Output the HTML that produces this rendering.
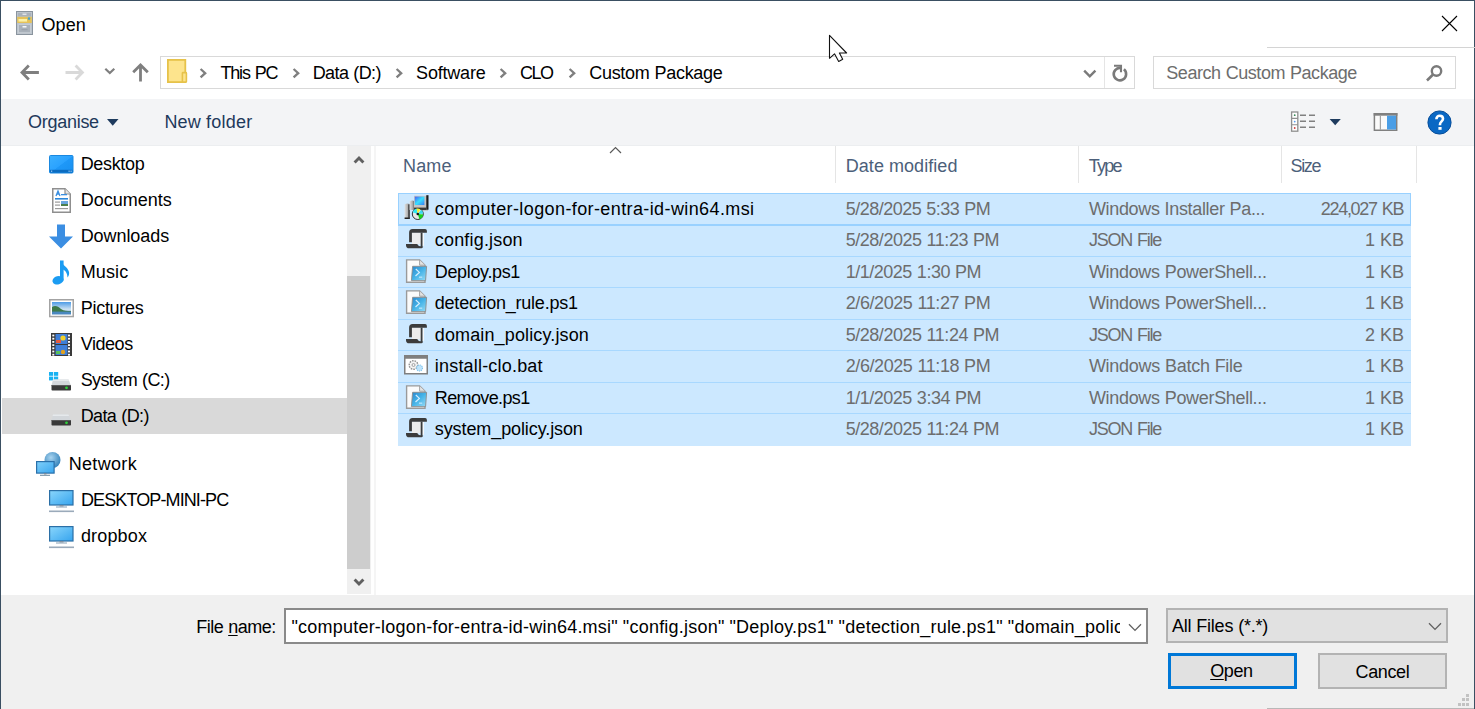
<!DOCTYPE html><html><head><meta charset="utf-8"><style>
html,body{margin:0;padding:0;}
body{width:1475px;height:709px;overflow:hidden;position:relative;background:#fff;font-family:"Liberation Sans",sans-serif;}
.t{position:absolute;white-space:nowrap;line-height:normal;}
</style></head><body>
<div style="position:absolute;left:0px;top:0px;width:1475px;height:1px;background:#3a4f62"></div>
<div style="position:absolute;left:0px;top:0px;width:1px;height:709px;background:#3a4f62"></div>
<div style="position:absolute;left:1474px;top:0px;width:1px;height:709px;background:#3a4f62"></div>
<div class="t" style="left:41.50px;top:15px;font-size:18px;color:#000;letter-spacing:0.100px;word-spacing:-0.100px;">Open</div>
<svg style="position:absolute;left:1441px;top:15px;" width="17" height="17" viewBox="0 0 17 17"><path d="M1 1L16 16M16 1L1 16" stroke="#000" stroke-width="1.1"/></svg>
<div style="position:absolute;left:1267px;top:47px;width:208px;height:1px;background:#d4d4d4"></div>
<div style="position:absolute;left:160px;top:56px;width:975px;height:33px;border:1px solid #d9d9d9;box-sizing:border-box;background:#fff"></div>
<div style="position:absolute;left:1104px;top:57px;width:1px;height:31px;background:#e5e5e5"></div>
<div style="position:absolute;left:1153px;top:56px;width:303px;height:33px;border:1px solid #d9d9d9;box-sizing:border-box;background:#fff"></div>
<div class="t" style="left:220.50px;top:63px;font-size:18px;color:#000;letter-spacing:-1.200px;word-spacing:1.200px;">This PC</div>
<div class="t" style="left:312.70px;top:63px;font-size:18px;color:#000;letter-spacing:-0.600px;word-spacing:0.600px;">Data (D:)</div>
<div class="t" style="left:416.10px;top:63px;font-size:18px;color:#000;letter-spacing:-0.200px;word-spacing:0.200px;">Software</div>
<div class="t" style="left:520.00px;top:63px;font-size:18px;color:#000;letter-spacing:-1.450px;word-spacing:1.450px;">CLO</div>
<div class="t" style="left:589.20px;top:63px;font-size:18px;color:#000;letter-spacing:-0.285px;word-spacing:0.285px;">Custom Package</div>
<svg style="position:absolute;left:199px;top:67px;" width="9" height="12" viewBox="0 0 9 12"><path d="M1.6 2L6.2 6.2L1.6 10.4" fill="none" stroke="#7f7f7f" stroke-width="2.3"/></svg>
<svg style="position:absolute;left:292px;top:67px;" width="9" height="12" viewBox="0 0 9 12"><path d="M1.6 2L6.2 6.2L1.6 10.4" fill="none" stroke="#7f7f7f" stroke-width="2.3"/></svg>
<svg style="position:absolute;left:395px;top:67px;" width="9" height="12" viewBox="0 0 9 12"><path d="M1.6 2L6.2 6.2L1.6 10.4" fill="none" stroke="#7f7f7f" stroke-width="2.3"/></svg>
<svg style="position:absolute;left:499px;top:67px;" width="9" height="12" viewBox="0 0 9 12"><path d="M1.6 2L6.2 6.2L1.6 10.4" fill="none" stroke="#7f7f7f" stroke-width="2.3"/></svg>
<svg style="position:absolute;left:568px;top:67px;" width="9" height="12" viewBox="0 0 9 12"><path d="M1.6 2L6.2 6.2L1.6 10.4" fill="none" stroke="#7f7f7f" stroke-width="2.3"/></svg>
<div class="t" style="left:1166.30px;top:63px;font-size:18px;color:#6d6d6d;letter-spacing:-0.446px;word-spacing:0.446px;">Search Custom Package</div>
<div style="position:absolute;left:1px;top:99px;width:1473px;height:46px;background:#f3f4f6"></div>
<div style="position:absolute;left:1px;top:145px;width:1473px;height:1px;background:#eceef0"></div>
<div class="t" style="left:28.10px;top:112px;font-size:18px;color:#1e395b;letter-spacing:-0.286px;word-spacing:0.286px;">Organise</div>
<div class="t" style="left:164.40px;top:112px;font-size:18px;color:#1e395b;letter-spacing:0.225px;word-spacing:-0.225px;">New folder</div>
<svg style="position:absolute;left:107px;top:119px;" width="12" height="7" viewBox="0 0 12 7"><path d="M0 0H11.5L5.75 6.8Z" fill="#1e3b5e"/></svg>
<svg style="position:absolute;left:1329px;top:118px;" width="13" height="8" viewBox="0 0 13 8"><path d="M0.6 1H11.8L6.2 7.3Z" fill="#1e3b5e"/></svg>
<div style="position:absolute;left:2px;top:398px;width:345px;height:36px;background:#d9d9d9"></div>
<div class="t" style="left:80.70px;top:154px;font-size:18px;color:#000;letter-spacing:-0.333px;word-spacing:0.333px;">Desktop</div>
<div class="t" style="left:80.70px;top:190px;font-size:18px;color:#000;letter-spacing:0.013px;word-spacing:-0.013px;">Documents</div>
<div class="t" style="left:80.70px;top:226px;font-size:18px;color:#000;letter-spacing:-0.075px;word-spacing:0.075px;">Downloads</div>
<div class="t" style="left:80.70px;top:262px;font-size:18px;color:#000;letter-spacing:0.125px;word-spacing:-0.125px;">Music</div>
<div class="t" style="left:80.70px;top:298px;font-size:18px;color:#000;letter-spacing:-0.271px;word-spacing:0.271px;">Pictures</div>
<div class="t" style="left:80.70px;top:334px;font-size:18px;color:#000;letter-spacing:-0.450px;word-spacing:0.450px;">Videos</div>
<div class="t" style="left:80.70px;top:370px;font-size:18px;color:#000;letter-spacing:-0.611px;word-spacing:0.611px;">System (C:)</div>
<div class="t" style="left:80.70px;top:406px;font-size:18px;color:#000;letter-spacing:-0.614px;word-spacing:0.614px;">Data (D:)</div>
<div class="t" style="left:68.70px;top:454px;font-size:18px;color:#000;letter-spacing:0.329px;word-spacing:-0.329px;">Network</div>
<div class="t" style="left:80.90px;top:490px;font-size:18px;color:#000;letter-spacing:-0.882px;word-spacing:0.882px;">DESKTOP-MINI-PC</div>
<div class="t" style="left:80.90px;top:526px;font-size:18px;color:#000;letter-spacing:0.167px;word-spacing:-0.167px;">dropbox</div>
<div style="position:absolute;left:347px;top:146px;width:24px;height:448px;background:#f0f0f0"></div>
<div style="position:absolute;left:347px;top:276px;width:23px;height:293px;background:#cdcdcd"></div>
<svg style="position:absolute;left:353px;top:154px;" width="12" height="11" viewBox="0 0 12 11"><path d="M1.6 8.6L6 4L10.4 8.6" fill="none" stroke="#606060" stroke-width="2.9"/></svg>
<svg style="position:absolute;left:353px;top:577px;" width="12" height="11" viewBox="0 0 12 11"><path d="M1.6 2.4L6 7L10.4 2.4" fill="none" stroke="#606060" stroke-width="2.9"/></svg>
<div style="position:absolute;left:374px;top:146px;width:2px;height:449px;background:#f5f5f5"></div>
<div class="t" style="left:403.10px;top:156px;font-size:18px;color:#4c607a;letter-spacing:0.133px;word-spacing:-0.133px;">Name</div>
<div class="t" style="left:845.70px;top:156px;font-size:18px;color:#4c607a;letter-spacing:0.061px;word-spacing:-0.061px;">Date modified</div>
<div class="t" style="left:1088.70px;top:156px;font-size:18px;color:#4c607a;letter-spacing:-1.733px;word-spacing:1.733px;">Type</div>
<div class="t" style="left:1290.50px;top:156px;font-size:18px;color:#4c607a;letter-spacing:-1.333px;word-spacing:1.333px;">Size</div>
<svg style="position:absolute;left:609px;top:146px;" width="13" height="8" viewBox="0 0 13 8"><path d="M1 7L6.5 1.5L12 7" fill="none" stroke="#5a5a5a" stroke-width="1.2"/></svg>
<div style="position:absolute;left:835px;top:146px;width:1px;height:37px;background:#e5e5e5"></div>
<div style="position:absolute;left:1078px;top:146px;width:1px;height:37px;background:#e5e5e5"></div>
<div style="position:absolute;left:1281px;top:146px;width:1px;height:37px;background:#e5e5e5"></div>
<div style="position:absolute;left:1416px;top:146px;width:1px;height:37px;background:#e5e5e5"></div>
<div style="position:absolute;left:398px;top:193px;width:1013px;height:253px;background:#cce8ff"></div>
<div style="position:absolute;left:398px;top:224px;width:1013px;height:1px;background:#a8d8ff"></div>
<div style="position:absolute;left:398px;top:256px;width:1013px;height:1px;background:#a8d8ff"></div>
<div style="position:absolute;left:398px;top:287px;width:1013px;height:1px;background:#a8d8ff"></div>
<div style="position:absolute;left:398px;top:319px;width:1013px;height:1px;background:#a8d8ff"></div>
<div style="position:absolute;left:398px;top:350px;width:1013px;height:1px;background:#a8d8ff"></div>
<div style="position:absolute;left:398px;top:382px;width:1013px;height:1px;background:#a8d8ff"></div>
<div style="position:absolute;left:398px;top:413px;width:1013px;height:1px;background:#a8d8ff"></div>
<div style="position:absolute;left:398px;top:193px;width:1013px;height:33px;border:1px solid #99d1ff;border-bottom-width:2px;box-sizing:border-box"></div>
<div class="t" style="left:434.80px;top:199px;font-size:18px;color:#000;letter-spacing:0.394px;word-spacing:-0.394px;">computer-logon-for-entra-id-win64.msi</div>
<div class="t" style="left:845.70px;top:199px;font-size:18px;color:#6d6d6d;letter-spacing:-0.509px;word-spacing:0.509px;">5/28/2025 5:33 PM</div>
<div class="t" style="left:1088.90px;top:199px;font-size:18px;color:#6d6d6d;letter-spacing:-0.336px;word-spacing:0.336px;">Windows Installer Pa...</div>
<div class="t" style="left:1320.70px;top:199px;font-size:18px;color:#6d6d6d;letter-spacing:-1.278px;word-spacing:1.278px;">224,027 KB</div>
<div class="t" style="left:434.80px;top:230px;font-size:18px;color:#000;letter-spacing:0.178px;word-spacing:-0.178px;">config.json</div>
<div class="t" style="left:845.70px;top:230px;font-size:18px;color:#6d6d6d;letter-spacing:-0.463px;word-spacing:0.463px;">5/28/2025 11:23 PM</div>
<div class="t" style="left:1088.90px;top:230px;font-size:18px;color:#6d6d6d;letter-spacing:-1.243px;word-spacing:1.243px;">JSON File</div>
<div class="t" style="left:1365.10px;top:230px;font-size:18px;color:#6d6d6d;letter-spacing:0.000px;">1 KB</div>
<div class="t" style="left:434.80px;top:262px;font-size:18px;color:#000;letter-spacing:-0.350px;word-spacing:0.350px;">Deploy.ps1</div>
<div class="t" style="left:845.70px;top:262px;font-size:18px;color:#6d6d6d;letter-spacing:-0.487px;word-spacing:0.487px;">1/1/2025 1:30 PM</div>
<div class="t" style="left:1088.90px;top:262px;font-size:18px;color:#6d6d6d;letter-spacing:-0.317px;word-spacing:0.317px;">Windows PowerShell...</div>
<div class="t" style="left:1365.10px;top:262px;font-size:18px;color:#6d6d6d;letter-spacing:0.000px;">1 KB</div>
<div class="t" style="left:434.80px;top:293px;font-size:18px;color:#000;letter-spacing:-0.231px;word-spacing:0.231px;">detection_rule.ps1</div>
<div class="t" style="left:845.70px;top:293px;font-size:18px;color:#6d6d6d;letter-spacing:-0.411px;word-spacing:0.411px;">2/6/2025 11:27 PM</div>
<div class="t" style="left:1088.90px;top:293px;font-size:18px;color:#6d6d6d;letter-spacing:-0.317px;word-spacing:0.317px;">Windows PowerShell...</div>
<div class="t" style="left:1365.10px;top:293px;font-size:18px;color:#6d6d6d;letter-spacing:0.000px;">1 KB</div>
<div class="t" style="left:434.80px;top:325px;font-size:18px;color:#000;letter-spacing:0.132px;word-spacing:-0.132px;">domain_policy.json</div>
<div class="t" style="left:845.70px;top:325px;font-size:18px;color:#6d6d6d;letter-spacing:-0.463px;word-spacing:0.463px;">5/28/2025 11:24 PM</div>
<div class="t" style="left:1088.90px;top:325px;font-size:18px;color:#6d6d6d;letter-spacing:-1.243px;word-spacing:1.243px;">JSON File</div>
<div class="t" style="left:1365.10px;top:325px;font-size:18px;color:#6d6d6d;letter-spacing:0.000px;">2 KB</div>
<div class="t" style="left:434.80px;top:356px;font-size:18px;color:#000;letter-spacing:0.193px;word-spacing:-0.193px;">install-clo.bat</div>
<div class="t" style="left:845.70px;top:356px;font-size:18px;color:#6d6d6d;letter-spacing:-0.411px;word-spacing:0.411px;">2/6/2025 11:18 PM</div>
<div class="t" style="left:1088.90px;top:356px;font-size:18px;color:#6d6d6d;letter-spacing:-0.275px;word-spacing:0.275px;">Windows Batch File</div>
<div class="t" style="left:1365.10px;top:356px;font-size:18px;color:#6d6d6d;letter-spacing:0.000px;">1 KB</div>
<div class="t" style="left:434.80px;top:388px;font-size:18px;color:#000;letter-spacing:-0.622px;word-spacing:0.622px;">Remove.ps1</div>
<div class="t" style="left:845.70px;top:388px;font-size:18px;color:#6d6d6d;letter-spacing:-0.487px;word-spacing:0.487px;">1/1/2025 3:34 PM</div>
<div class="t" style="left:1088.90px;top:388px;font-size:18px;color:#6d6d6d;letter-spacing:-0.317px;word-spacing:0.317px;">Windows PowerShell...</div>
<div class="t" style="left:1365.10px;top:388px;font-size:18px;color:#6d6d6d;letter-spacing:0.000px;">1 KB</div>
<div class="t" style="left:434.80px;top:419px;font-size:18px;color:#000;letter-spacing:-0.097px;word-spacing:0.097px;">system_policy.json</div>
<div class="t" style="left:845.70px;top:419px;font-size:18px;color:#6d6d6d;letter-spacing:-0.463px;word-spacing:0.463px;">5/28/2025 11:24 PM</div>
<div class="t" style="left:1088.90px;top:419px;font-size:18px;color:#6d6d6d;letter-spacing:-1.243px;word-spacing:1.243px;">JSON File</div>
<div class="t" style="left:1365.10px;top:419px;font-size:18px;color:#6d6d6d;letter-spacing:0.000px;">1 KB</div>
<div style="position:absolute;left:1px;top:595px;width:1473px;height:114px;background:#f0f0f0"></div>
<div class="t" style="left:196.20px;top:617px;font-size:18px;color:#000;letter-spacing:-0.512px;word-spacing:0.512px;">File <span style="text-decoration:underline;text-underline-offset:2px">n</span>ame:</div>
<div style="position:absolute;left:284px;top:608px;width:864px;height:36px;background:#fff;border:2px solid #8a8a8a;box-sizing:border-box"></div>
<div style="position:absolute;left:286px;top:610px;width:834px;height:33px;overflow:hidden">
<div class="t" style="left:5.50px;top:7px;font-size:18px;color:#000;letter-spacing:0.217px;word-spacing:-0.217px;">&quot;computer-logon-for-entra-id-win64.msi&quot; &quot;config.json&quot; &quot;Deploy.ps1&quot; &quot;detection_rule.ps1&quot; &quot;domain_policy.json&quot; &quot;install-clo.bat&quot;</div>
</div>
<div style="position:absolute;left:1166px;top:608px;width:282px;height:35px;background:#e1e1e1;border:2px solid #b3b3b3;box-sizing:border-box"></div>
<div class="t" style="left:1171.90px;top:616px;font-size:18px;color:#000;letter-spacing:-0.217px;word-spacing:0.217px;">All Files (*.*)</div>
<div style="position:absolute;left:1168px;top:653px;width:129px;height:36px;background:#e1e1e1;border:3px solid #0078d7;box-sizing:border-box"></div>
<div class="t" style="left:1210.20px;top:661px;font-size:18px;color:#000;letter-spacing:-0.400px;word-spacing:0.400px;"><span style="text-decoration:underline;text-underline-offset:2px">O</span>pen</div>
<div style="position:absolute;left:1318px;top:653px;width:129px;height:36px;background:#e1e1e1;border:2px solid #b3b3b3;box-sizing:border-box"></div>
<div class="t" style="left:1355.60px;top:662px;font-size:18px;color:#000;letter-spacing:-0.380px;word-spacing:0.380px;">Cancel</div>
<svg style="position:absolute;left:1128px;top:623px;" width="14" height="9" viewBox="0 0 14 9"><path d="M1 1.2L7 7.4L13 1.2" fill="none" stroke="#606060" stroke-width="1.3"/></svg>
<svg style="position:absolute;left:1428px;top:622px;" width="14" height="9" viewBox="0 0 14 9"><path d="M1 1.2L7 7.4L13 1.2" fill="none" stroke="#606060" stroke-width="1.3"/></svg>
<div style="position:absolute;left:1267px;top:708px;width:207px;height:1px;background:#b8b8b8"></div>
<svg style="position:absolute;left:16px;top:11px;" width="17" height="24" viewBox="0 0 17 24"><rect x="0.5" y="0.5" width="16" height="23" fill="#bcc4cc" stroke="#8a949e"/>
<rect x="2" y="2" width="13" height="3.5" fill="#aab2bb"/><rect x="6.5" y="2.6" width="4" height="1.2" fill="#eef1f3"/>
<rect x="1.2" y="5.8" width="14.6" height="6.2" fill="#e6c258"/><rect x="2.5" y="8" width="8.5" height="2.6" fill="#fbf1a6"/>
<circle cx="13" cy="7.6" r="1.3" fill="#4aa3c8"/>
<rect x="2.5" y="13.5" width="12" height="8.2" fill="#a9b1ba" stroke="#c5ccd3"/><rect x="6.5" y="15" width="4" height="1.5" fill="#f5f7f8"/><rect x="5.5" y="18" width="6" height="1.2" fill="#9aa2ab"/></svg>
<svg style="position:absolute;left:167px;top:59px;" width="21" height="25" viewBox="0 0 21 25"><rect x="0.9" y="0.9" width="17.4" height="22.2" fill="#fde48d" stroke="#e6c24a" stroke-width="1.8"/>
<rect x="15.4" y="13.6" width="4" height="9.5" rx="0.6" fill="#fde48d" stroke="#e6c24a" stroke-width="1.6"/></svg>
<svg style="position:absolute;left:19px;top:63px;" width="22" height="19" viewBox="0 0 22 19"><path d="M3 9.5H19.9M9.8 2.6L3 9.5L9.8 16.4" fill="none" stroke="#7f7f7f" stroke-width="2.8"/></svg>
<svg style="position:absolute;left:64px;top:63px;" width="22" height="19" viewBox="0 0 22 19"><path d="M1.5 9.5H18.4M11.6 2.6L18.4 9.5L11.6 16.4" fill="none" stroke="#d9d9d9" stroke-width="2.8"/></svg>
<svg style="position:absolute;left:103px;top:67px;" width="13" height="8" viewBox="0 0 13 8"><path d="M2.3 1.8L6.8 6L11.3 1.8" fill="none" stroke="#7f7f7f" stroke-width="2.2"/></svg>
<svg style="position:absolute;left:130px;top:62px;" width="21" height="21" viewBox="0 0 21 21"><path d="M10.5 19.6V3M3.2 10.3L10.5 3L17.8 10.3" fill="none" stroke="#7f7f7f" stroke-width="2.8"/></svg>
<svg style="position:absolute;left:1083px;top:69px;" width="14" height="10" viewBox="0 0 14 10"><path d="M1.2 1.6L6.8 7.3L12.4 1.6" fill="none" stroke="#7a7a7a" stroke-width="2.4"/></svg>
<svg style="position:absolute;left:1110px;top:63px;" width="20" height="20" viewBox="0 0 20 20"><path d="M13.9 6.35A6.2 6.2 0 1 1 10.44 4.92" fill="none" stroke="#7a7a7a" stroke-width="2.6"/><path d="M4 2.7H11V9.2" fill="none" stroke="#7a7a7a" stroke-width="2.1"/></svg>
<svg style="position:absolute;left:1424px;top:63px;" width="20" height="20" viewBox="0 0 20 20"><circle cx="12.5" cy="8" r="4.7" fill="none" stroke="#7a7a7a" stroke-width="2.4"/><path d="M8.8 11.8L3 17.5" stroke="#7a7a7a" stroke-width="2.6"/></svg>
<svg style="position:absolute;left:1290px;top:111px;" width="27" height="21" viewBox="0 0 27 21"><rect x="1.6" y="1" width="6.2" height="19.2" fill="#fff" stroke="#8f8f8f" stroke-width="1.3"/><path d="M1.6 7.4H7.8M1.6 13.8H7.8" stroke="#8f8f8f" stroke-width="1.1"/><circle cx="4.7" cy="4.2" r="0.9" fill="#3a8a5a"/><circle cx="4.7" cy="10.6" r="0.9" fill="#5aa0f0"/><circle cx="4.7" cy="17" r="0.9" fill="#d04040"/><path d="M10 4.2H16M19 4.2H25M10 10.2H16M19 10.2H25M10 16.2H16M19 16.2H25" stroke="#808080" stroke-width="1.6"/></svg>
<svg style="position:absolute;left:1373px;top:113px;" width="25" height="18" viewBox="0 0 25 18"><rect x="1.4" y="0.75" width="22.3" height="16.5" fill="#fafafa" stroke="#808080" stroke-width="1.5"/><rect x="0.65" y="0" width="23.8" height="2.7" fill="#808080"/><rect x="6.8" y="2.7" width="1.1" height="14" fill="#9a9a9a"/><rect x="14" y="2.7" width="9" height="13.8" fill="#4a9ee6"/></svg>
<svg style="position:absolute;left:1427px;top:110px;" width="25" height="25" viewBox="0 0 25 25"><circle cx="12.5" cy="12.5" r="11.6" fill="#0a68c4" stroke="#0a4f9a" stroke-width="1"/><path d="M9.4 9.3C9.4 7 10.9 5.8 12.7 5.8C14.6 5.8 16 7 16 8.8C16 11.2 13 11.5 13 14.3V15.2" fill="none" stroke="#fff" stroke-width="2.6"/><rect x="11.4" y="17" width="3.2" height="2.8" fill="#fff"/></svg>
<svg style="position:absolute;left:49px;top:155px;" width="25" height="19" viewBox="0 0 25 19"><defs><linearGradient id="dg" x1="0" y1="0" x2="1" y2="1"><stop offset="0" stop-color="#3cb0ff"/><stop offset="0.5" stop-color="#2aa2ff"/><stop offset="0.52" stop-color="#1e98f8"/><stop offset="1" stop-color="#1890f0"/></linearGradient></defs>
<rect x="0.5" y="0.5" width="23.5" height="17.5" rx="1" fill="url(#dg)" stroke="#1a88e0"/>
<rect x="1" y="14.8" width="22.5" height="2.8" fill="#0b6cc0"/>
<rect x="2" y="15.6" width="1.2" height="1.2" fill="#9fd0ff"/><rect x="19.5" y="15.6" width="1.2" height="1.2" fill="#9fd0ff"/><rect x="21.5" y="15.6" width="1.2" height="1.2" fill="#9fd0ff"/></svg>
<svg style="position:absolute;left:52px;top:188px;" width="19" height="25" viewBox="0 0 19 25"><path d="M0.75 0.75H13L18.25 6V24.25H0.75Z" fill="#fff" stroke="#8f8f8f" stroke-width="1.5"/>
<path d="M13 0.75V6H18.25" fill="#e6e6e6" stroke="#8f8f8f" stroke-width="1.2"/>
<path d="M4 8L6 3L8 8M4.8 6H7.2" fill="none" stroke="#3a8ee0" stroke-width="1.3"/>
<rect x="9" y="6" width="6" height="1.3" fill="#3a8ee0"/>
<rect x="3" y="10" width="13" height="1.6" fill="#2b87da"/>
<rect x="3" y="13.5" width="5" height="1.2" fill="#9a9a9a"/><rect x="9" y="13" width="7" height="5" fill="#6aa6e0"/><rect x="9" y="16" width="7" height="2" fill="#4c7f4c"/>
<rect x="3" y="16.5" width="5" height="1.2" fill="#9a9a9a"/><rect x="3" y="20" width="13" height="1.2" fill="#9a9a9a"/></svg>
<svg style="position:absolute;left:49px;top:224px;" width="25" height="25" viewBox="0 0 25 25"><path d="M8 0.5H16V12.5H24L12 24.5L0 12.5H8Z" fill="#3b8ee2"/></svg>
<svg style="position:absolute;left:52px;top:260px;" width="18" height="25" viewBox="0 0 18 25"><ellipse cx="6" cy="20.3" rx="5.6" ry="4.1" transform="rotate(-15 6 20.3)" fill="#1b9cf2"/>
<rect x="8" y="0.5" width="3.6" height="20" fill="#1b9cf2"/>
<path d="M8 0.5C9 4 16 7 17 12C17.5 14.5 16.5 16.5 15.5 17.5C15.5 15 14.5 11 11 9.5Z" fill="#1b9cf2"/></svg>
<svg style="position:absolute;left:49px;top:299px;" width="25" height="19" viewBox="0 0 25 19"><rect x="0.75" y="0.75" width="23.5" height="16.8" fill="#fff" stroke="#a3a3a3" stroke-width="1.5"/>
<defs><linearGradient id="sky" x1="0" y1="0" x2="0" y2="1"><stop offset="0" stop-color="#4d9be6"/><stop offset="0.6" stop-color="#cfe3f2"/><stop offset="1" stop-color="#5b8fc5"/></linearGradient></defs>
<rect x="3" y="3" width="19" height="12.3" fill="url(#sky)"/>
<path d="M3 8C6 6 9 7 12 10C15 12 18 12 22 12V13H3Z" fill="#3e7a4a"/>
<rect x="3" y="12.6" width="19" height="2.7" fill="#4a88c0"/></svg>
<svg style="position:absolute;left:51px;top:333px;" width="21" height="23" viewBox="0 0 21 23"><rect x="0" y="0" width="21" height="23" fill="#3a3a3a"/><rect x="1.3" y="1.6" width="2" height="1.8" fill="#fff"/><rect x="17" y="1.6" width="2" height="1.8" fill="#fff"/><rect x="1.3" y="4.8" width="2" height="1.8" fill="#fff"/><rect x="17" y="4.8" width="2" height="1.8" fill="#fff"/><rect x="1.3" y="8.0" width="2" height="1.8" fill="#fff"/><rect x="17" y="8.0" width="2" height="1.8" fill="#fff"/><rect x="1.3" y="11.2" width="2" height="1.8" fill="#fff"/><rect x="17" y="11.2" width="2" height="1.8" fill="#fff"/><rect x="1.3" y="14.4" width="2" height="1.8" fill="#fff"/><rect x="17" y="14.4" width="2" height="1.8" fill="#fff"/><rect x="1.3" y="17.6" width="2" height="1.8" fill="#fff"/><rect x="17" y="17.6" width="2" height="1.8" fill="#fff"/><rect x="1.3" y="20.8" width="2" height="1.8" fill="#fff"/><rect x="17" y="20.8" width="2" height="1.8" fill="#fff"/>
<rect x="4.5" y="1" width="12" height="10" fill="#3f7fd8"/><rect x="4.5" y="12" width="12" height="10" fill="#3f7fd8"/>
<circle cx="12" cy="5" r="2.6" fill="#f2d02a"/><rect x="5" y="7" width="5" height="3" fill="#e85a3a"/>
<circle cx="12" cy="19" r="2.2" fill="#e0a020"/><rect x="5" y="18" width="4" height="3" fill="#5ac05a"/></svg>
<svg style="position:absolute;left:49px;top:372px;" width="23" height="19" viewBox="0 0 23 19"><rect x="0" y="0" width="4.2" height="3.8" fill="#19b2f2"/><rect x="5" y="0" width="4.2" height="3.8" fill="#19b2f2"/>
<rect x="0" y="4.6" width="4.2" height="3.8" fill="#19b2f2"/><rect x="5" y="4.6" width="4.2" height="3.8" fill="#19b2f2"/><path d="M4 7.5H19.5L22 13.5H2.5Z" fill="#d3d7db"/><path d="M4 7.5H19.5L20 9H3.5Z" fill="#e6e9ec"/>
<rect x="2.5" y="13" width="19.5" height="5.5" rx="0.8" fill="#3a3a3a"/><rect x="2.5" y="13" width="19.5" height="1" fill="#5a5a5a"/>
<circle cx="17.5" cy="15.8" r="1.4" fill="#2ed03a"/></svg>
<svg style="position:absolute;left:49px;top:407px;" width="23" height="19" viewBox="0 0 23 19"><path d="M4 7.5H19.5L22 13.5H2.5Z" fill="#d3d7db"/><path d="M4 7.5H19.5L20 9H3.5Z" fill="#e6e9ec"/>
<rect x="2.5" y="13" width="19.5" height="5.5" rx="0.8" fill="#3a3a3a"/><rect x="2.5" y="13" width="19.5" height="1" fill="#5a5a5a"/>
<circle cx="17.5" cy="15.8" r="1.4" fill="#2ed03a"/></svg>
<svg style="position:absolute;left:36px;top:452px;" width="26" height="25" viewBox="0 0 26 25"><defs><radialGradient id="gl" cx="0.4" cy="0.35" r="0.7"><stop offset="0" stop-color="#a8d4f0"/><stop offset="1" stop-color="#2f7fb8"/></radialGradient>
<linearGradient id="ms" x1="0" y1="0" x2="1" y2="1"><stop offset="0" stop-color="#7fd0fb"/><stop offset="1" stop-color="#3aa6ee"/></linearGradient></defs>
<circle cx="16.5" cy="8" r="8" fill="url(#gl)"/>
<rect x="0.6" y="9.6" width="17.5" height="11.5" fill="url(#ms)" stroke="#2a70aa" stroke-width="1.2"/>
<rect x="8" y="21" width="2.5" height="1.5" fill="#7a8a99"/><rect x="4" y="22.7" width="10" height="1.3" fill="#8aa0b0"/></svg>
<svg style="position:absolute;left:49px;top:490px;" width="25" height="23" viewBox="0 0 25 23"><defs><linearGradient id="ps" x1="0" y1="0" x2="1" y2="1"><stop offset="0" stop-color="#8ad6fc"/><stop offset="1" stop-color="#36a4ee"/></linearGradient></defs>
<rect x="0.6" y="0.6" width="23.4" height="14.4" fill="url(#ps)" stroke="#2b6fa6" stroke-width="1.2"/>
<rect x="10.5" y="15" width="4" height="1.5" fill="#8090a0"/><rect x="7" y="16.5" width="11" height="1" fill="#8aa0b4"/>
<rect x="0" y="20.5" width="25" height="1.6" fill="#9aaaba"/></svg>
<svg style="position:absolute;left:49px;top:526px;" width="25" height="23" viewBox="0 0 25 23"><defs><linearGradient id="ps" x1="0" y1="0" x2="1" y2="1"><stop offset="0" stop-color="#8ad6fc"/><stop offset="1" stop-color="#36a4ee"/></linearGradient></defs>
<rect x="0.6" y="0.6" width="23.4" height="14.4" fill="url(#ps)" stroke="#2b6fa6" stroke-width="1.2"/>
<rect x="10.5" y="15" width="4" height="1.5" fill="#8090a0"/><rect x="7" y="16.5" width="11" height="1" fill="#8aa0b4"/>
<rect x="0" y="20.5" width="25" height="1.6" fill="#9aaaba"/></svg>
<svg style="position:absolute;left:404px;top:195px;" width="25" height="25" viewBox="0 0 25 25"><defs><linearGradient id="tw" x1="0" y1="0" x2="1" y2="0"><stop offset="0" stop-color="#e0e0e0"/><stop offset="0.6" stop-color="#b0b0b0"/><stop offset="1" stop-color="#6a6a6a"/></linearGradient>
<linearGradient id="scr" x1="0" y1="0" x2="1" y2="1"><stop offset="0" stop-color="#4a5cf0"/><stop offset="0.5" stop-color="#38e0ff"/><stop offset="1" stop-color="#3a7cf0"/></linearGradient></defs>
<path d="M0.6 9.5Q3 7.6 5.7 9V23.6H0.6Z" fill="url(#tw)"/><rect x="0.6" y="22.5" width="5.2" height="1.5" fill="#202020"/><rect x="4.3" y="9.5" width="1.4" height="14" fill="#3a3a3a"/>
<path d="M5.6 6.5Q8 4.8 10.2 6V15H5.6Z" fill="url(#tw)"/>
<rect x="10" y="0.8" width="14" height="15" fill="#c4c4c4"/><rect x="22.3" y="0.2" width="2.2" height="14.5" fill="#1a1a1a"/>
<rect x="10.8" y="1.6" width="9.6" height="8.4" fill="url(#scr)"/>
<rect x="10" y="12.6" width="12.5" height="2.4" fill="#3a3a3a"/>
<circle cx="13.8" cy="19" r="5.5" fill="#e8e8e8" stroke="#1e1e1e" stroke-width="0.9"/>
<path d="M13.8 19L8.6 17.2A5.5 5.5 0 0 1 12.5 13.6Z" fill="#2ee6f0"/><path d="M13.8 19L12.5 13.6A5.5 5.5 0 0 1 16.4 14.2Z" fill="#f4f030"/>
<path d="M13.8 19L19.2 19.6A5.5 5.5 0 0 1 15.4 24.3Z" fill="#18d020"/><path d="M13.8 19L17.2 14.8A5.5 5.5 0 0 1 19.2 18.8Z" fill="#3ad8f0"/>
<circle cx="13.8" cy="19" r="1.3" fill="#101010"/></svg>
<svg style="position:absolute;left:405px;top:228px;" width="23" height="22" viewBox="0 0 23 22"><rect x="6.9" y="4.5" width="9" height="11.8" fill="#ececec"/><rect x="17.4" y="4.8" width="1.6" height="13" fill="#f6f8fa"/>
<path d="M4.1 14.2V4.6Q4.1 1.1 7.6 1.1H20.2Q21.9 1.1 21.9 2.9V4.8H6.9V14.2Z" fill="#3c3c3c"/>
<rect x="15.7" y="4.6" width="1.8" height="15" fill="#3c3c3c"/>
<path d="M1 15.9H11.6Q12.6 15.9 13 17Q13.5 18.2 15.4 18.2H17.5V19.5Q17.5 20.3 16.5 20.3H4.2Q1 20.3 1 17.2Z" fill="#3c3c3c"/></svg>
<svg style="position:absolute;left:405px;top:259px;" width="23" height="25" viewBox="0 0 23 25"><path d="M1.6 0.9H14.6L20 6.2V23.2H1.6Z" fill="#fbfbfb" stroke="#9a9a9a" stroke-width="1.4"/>
<path d="M14.6 0.9V6.2H20" fill="#e4e4e4" stroke="#a5a5a5" stroke-width="1"/>
<defs><linearGradient id="psg" x1="0" y1="0" x2="1" y2="1"><stop offset="0" stop-color="#2a86cc"/><stop offset="0.5" stop-color="#46b4e8"/><stop offset="1" stop-color="#9adcf4"/></linearGradient></defs>
<path d="M7.6 7.3H21.6L20.6 21.6H6.4Z" fill="url(#psg)" stroke="#8c8c8c" stroke-width="0.9"/>
<path d="M10.8 10L14.4 13.4L10.5 17" fill="none" stroke="#d6efff" stroke-width="1.2"/><rect x="14" y="17.6" width="3.2" height="1.1" fill="#c8ecff"/></svg>
<svg style="position:absolute;left:405px;top:290px;" width="23" height="25" viewBox="0 0 23 25"><path d="M1.6 0.9H14.6L20 6.2V23.2H1.6Z" fill="#fbfbfb" stroke="#9a9a9a" stroke-width="1.4"/>
<path d="M14.6 0.9V6.2H20" fill="#e4e4e4" stroke="#a5a5a5" stroke-width="1"/>
<defs><linearGradient id="psg" x1="0" y1="0" x2="1" y2="1"><stop offset="0" stop-color="#2a86cc"/><stop offset="0.5" stop-color="#46b4e8"/><stop offset="1" stop-color="#9adcf4"/></linearGradient></defs>
<path d="M7.6 7.3H21.6L20.6 21.6H6.4Z" fill="url(#psg)" stroke="#8c8c8c" stroke-width="0.9"/>
<path d="M10.8 10L14.4 13.4L10.5 17" fill="none" stroke="#d6efff" stroke-width="1.2"/><rect x="14" y="17.6" width="3.2" height="1.1" fill="#c8ecff"/></svg>
<svg style="position:absolute;left:405px;top:323px;" width="23" height="22" viewBox="0 0 23 22"><rect x="6.9" y="4.5" width="9" height="11.8" fill="#ececec"/><rect x="17.4" y="4.8" width="1.6" height="13" fill="#f6f8fa"/>
<path d="M4.1 14.2V4.6Q4.1 1.1 7.6 1.1H20.2Q21.9 1.1 21.9 2.9V4.8H6.9V14.2Z" fill="#3c3c3c"/>
<rect x="15.7" y="4.6" width="1.8" height="15" fill="#3c3c3c"/>
<path d="M1 15.9H11.6Q12.6 15.9 13 17Q13.5 18.2 15.4 18.2H17.5V19.5Q17.5 20.3 16.5 20.3H4.2Q1 20.3 1 17.2Z" fill="#3c3c3c"/></svg>
<svg style="position:absolute;left:404px;top:355px;" width="24" height="20" viewBox="0 0 24 20"><rect x="0.75" y="0.75" width="22.5" height="18" fill="#fff" stroke="#7f7f7f" stroke-width="1.5"/>
<rect x="0.75" y="0.75" width="22.5" height="3" fill="#7f7f7f"/>
<circle cx="9.5" cy="10" r="4.3" fill="#f4f4f4" stroke="#8f8f8f" stroke-width="1.4" stroke-dasharray="1.6 1"/>
<circle cx="9.5" cy="10" r="1.5" fill="none" stroke="#9a9a9a" stroke-width="0.9"/>
<circle cx="15.5" cy="13" r="3" fill="#bfe4fb" stroke="#7fc2ec" stroke-width="1.1" stroke-dasharray="1.2 0.8"/></svg>
<svg style="position:absolute;left:405px;top:385px;" width="23" height="25" viewBox="0 0 23 25"><path d="M1.6 0.9H14.6L20 6.2V23.2H1.6Z" fill="#fbfbfb" stroke="#9a9a9a" stroke-width="1.4"/>
<path d="M14.6 0.9V6.2H20" fill="#e4e4e4" stroke="#a5a5a5" stroke-width="1"/>
<defs><linearGradient id="psg" x1="0" y1="0" x2="1" y2="1"><stop offset="0" stop-color="#2a86cc"/><stop offset="0.5" stop-color="#46b4e8"/><stop offset="1" stop-color="#9adcf4"/></linearGradient></defs>
<path d="M7.6 7.3H21.6L20.6 21.6H6.4Z" fill="url(#psg)" stroke="#8c8c8c" stroke-width="0.9"/>
<path d="M10.8 10L14.4 13.4L10.5 17" fill="none" stroke="#d6efff" stroke-width="1.2"/><rect x="14" y="17.6" width="3.2" height="1.1" fill="#c8ecff"/></svg>
<svg style="position:absolute;left:405px;top:417px;" width="23" height="22" viewBox="0 0 23 22"><rect x="6.9" y="4.5" width="9" height="11.8" fill="#ececec"/><rect x="17.4" y="4.8" width="1.6" height="13" fill="#f6f8fa"/>
<path d="M4.1 14.2V4.6Q4.1 1.1 7.6 1.1H20.2Q21.9 1.1 21.9 2.9V4.8H6.9V14.2Z" fill="#3c3c3c"/>
<rect x="15.7" y="4.6" width="1.8" height="15" fill="#3c3c3c"/>
<path d="M1 15.9H11.6Q12.6 15.9 13 17Q13.5 18.2 15.4 18.2H17.5V19.5Q17.5 20.3 16.5 20.3H4.2Q1 20.3 1 17.2Z" fill="#3c3c3c"/></svg>
<svg style="position:absolute;left:828px;top:34px;" width="22" height="31" viewBox="0 0 22 31"><path d="M1.5 1.3V24.3L6.5 19.8L10.7 27.4L14.7 25.3L11.4 19H18.6Z" fill="#fff" stroke="#111" stroke-width="1.1" stroke-linejoin="round"/></svg>
<div style="position:absolute;left:1466px;top:694px;width:3px;height:3px;background:#c2c2c2"></div>
<div style="position:absolute;left:1462px;top:698px;width:3px;height:3px;background:#c2c2c2"></div>
<div style="position:absolute;left:1466px;top:698px;width:3px;height:3px;background:#c2c2c2"></div>
<div style="position:absolute;left:1458px;top:703px;width:3px;height:3px;background:#c2c2c2"></div>
<div style="position:absolute;left:1462px;top:703px;width:3px;height:3px;background:#c2c2c2"></div>
<div style="position:absolute;left:1466px;top:703px;width:3px;height:3px;background:#c2c2c2"></div>
</body></html>
